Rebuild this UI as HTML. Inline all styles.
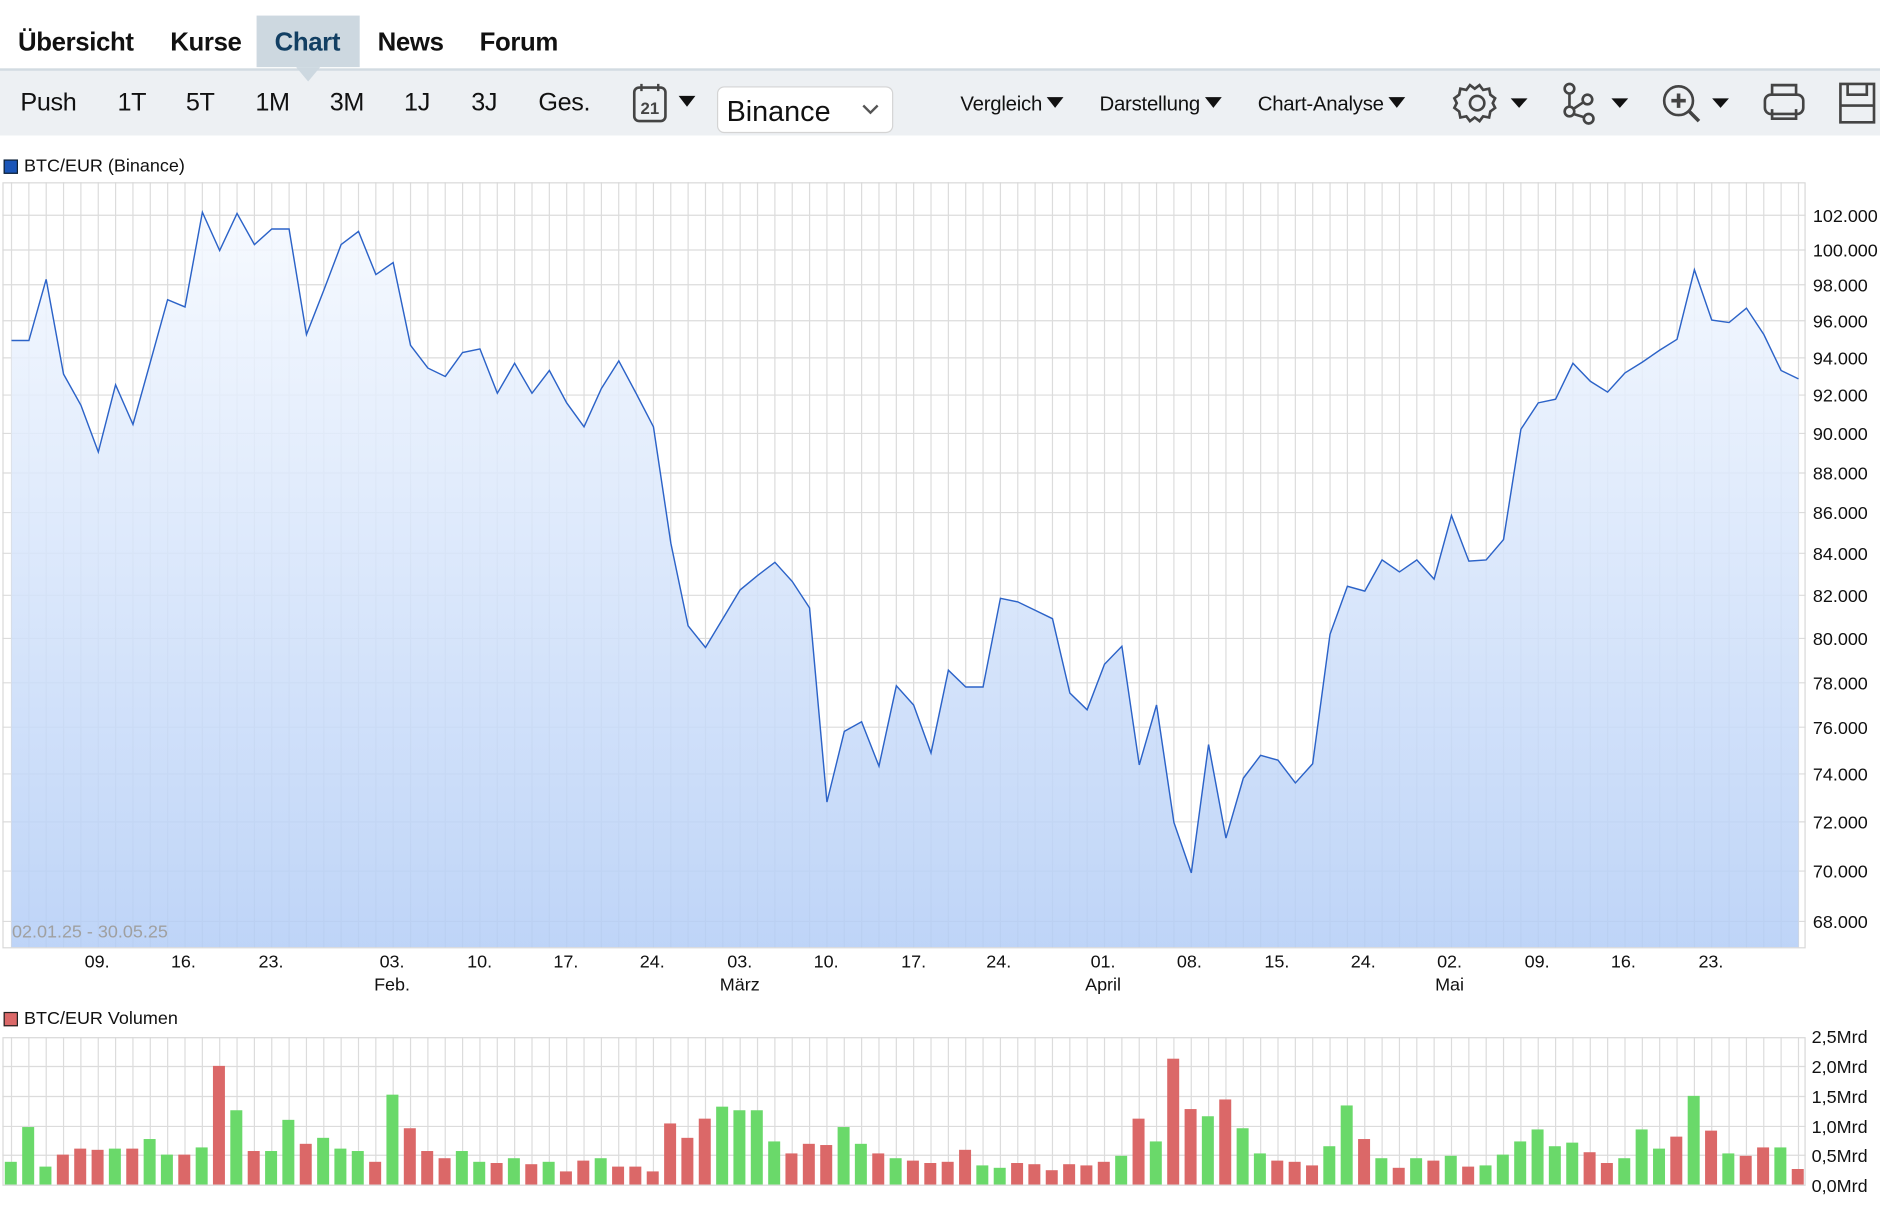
<!DOCTYPE html>
<html><head><meta charset="utf-8">
<style>
html,body{margin:0;padding:0;background:#fff;overflow:hidden;width:1880px;height:1206px}
#w{position:absolute;left:0;top:0;width:1568px;height:1006px;transform:scale(1.19898);transform-origin:0 0;font-family:"Liberation Sans",sans-serif;color:#111}
.tab{position:absolute;top:13px;height:43px;line-height:44px;font-weight:bold;font-size:21.5px;letter-spacing:-0.3px}
.tb{position:absolute;top:57px;left:0;width:1568px;height:56px;background:#edf0f3;border-top:2px solid #d2dbe2;box-sizing:border-box}
.ti{position:absolute;top:74px;font-size:21px;letter-spacing:-0.3px}
.dd{position:absolute;top:77px;font-size:17px;letter-spacing:-0.2px}
.car{display:inline-block;width:0;height:0;border-left:7px solid transparent;border-right:7px solid transparent;border-top:9px solid #111;margin-left:4px;vertical-align:2px}
.ax{font-size:15px;fill:#111}
</style></head><body><div id="w">
<div style="position:absolute;left:214px;top:13px;width:86px;height:43px;background:#cdd8e0"></div>
<div style="position:absolute;left:247px;top:56px;width:0;height:0;border-left:10px solid transparent;border-right:10px solid transparent;border-top:12px solid #cdd8e0;z-index:3"></div>
<div class="tab" style="left:15px">Übersicht</div>
<div class="tab" style="left:142px">Kurse</div>
<div class="tab" style="left:229px;color:#123f63">Chart</div>
<div class="tab" style="left:315px">News</div>
<div class="tab" style="left:400px">Forum</div>
<div class="tb"></div>
<div class="ti" style="left:17px">Push</div>
<div class="ti" style="left:98px">1T</div>
<div class="ti" style="left:155px">5T</div>
<div class="ti" style="left:213px">1M</div>
<div class="ti" style="left:275px">3M</div>
<div class="ti" style="left:337px">1J</div>
<div class="ti" style="left:393px">3J</div>
<div class="ti" style="left:449px">Ges.</div>
<svg style="position:absolute;left:526px;top:68px" width="60" height="36">
<rect x="3" y="5" width="26" height="28" rx="4" fill="none" stroke="#444" stroke-width="2.2"/>
<line x1="9" y1="2" x2="9" y2="8" stroke="#444" stroke-width="2"/><line x1="23" y1="2" x2="23" y2="8" stroke="#444" stroke-width="2"/>
<text x="16" y="27" text-anchor="middle" font-size="14" font-weight="bold" fill="#444" font-family="Liberation Sans">21</text>
<path d="M40 12 L54 12 L47 21Z" fill="#111"/></svg>
<div style="position:absolute;left:598px;top:72px;width:147px;height:39px;background:#fff;border:1px solid #d4d4d4;border-radius:6px;box-sizing:border-box"></div>
<div style="position:absolute;left:606px;top:80px;font-size:24px">Binance</div>
<svg style="position:absolute;left:718px;top:85px" width="16" height="12"><path d="M2 3 L8 9 L14 3" fill="none" stroke="#555" stroke-width="2"/></svg>
<div class="dd" style="left:801px">Vergleich<span class="car"></span></div>
<div class="dd" style="left:917px">Darstellung<span class="car"></span></div>
<div class="dd" style="left:1049px">Chart-Analyse<span class="car"></span></div>
<svg style="position:absolute;left:1210px;top:64px" width="358" height="44" fill="none" stroke="#444" stroke-width="2.2">
<path d="M24 7 l3 4 5-1 1 5 4 3-2 4 2 4-4 3-1 5-5-1-3 4-4-3-4 3-3-4-5 1-1-5-4-3 2-4-2-4 4-3 1-5 5 1 3-4 4 3z"/>
<circle cx="22" cy="22" r="6"/>
<path d="M50 18 L64 18 L57 26Z" fill="#111" stroke="none"/>
<circle cx="99" cy="10" r="4"/><circle cx="114" cy="19" r="4"/><circle cx="99" cy="29" r="4"/><circle cx="115" cy="35" r="4"/>
<path d="M99 14 V25 M102 27 L111 21 M102 31 L112 34"/>
<path d="M134 18 L148 18 L141 26Z" fill="#111" stroke="none"/>
<circle cx="190" cy="20" r="12"/><path d="M199 29 L207 37 M184 20 H196 M190 14 V26" stroke-width="3"/>
<path d="M218 18 L232 18 L225 26Z" fill="#111" stroke="none"/>
<rect x="262" y="15" width="32" height="16" rx="5"/><path d="M268 15 V7 H288 V15 M268 27 V35 H288 V27"/>
<path d="M325 6 H353 V38 H325Z M331 6 V15 H347 V6 M325 24 H353"/>
</svg>
<div style="position:absolute;left:3px;top:133px;width:10px;height:10px;background:#1a55b8;border:1px solid #123"></div>
<div style="position:absolute;left:20px;top:130px;font-size:15px">BTC/EUR (Binance)</div>
<div style="position:absolute;left:3px;top:844px;width:10px;height:10px;background:#db6868;border:1px solid #222"></div>
<div style="position:absolute;left:20px;top:841px;font-size:15px">BTC/EUR Volumen</div>
<svg id="s" style="position:absolute;left:0;top:0" width="1568" height="1006">
<defs><linearGradient id="g" x1="0" y1="0" x2="0" y2="1"><stop offset="0" stop-color="#f5f9ff"/><stop offset="1" stop-color="#b3cdf6"/></linearGradient></defs>
<g id="grid" stroke="#dcdcdc" stroke-width="1"></g>
<path id="fill" fill="url(#g)" fill-opacity="0.85"/>
<polyline id="line" fill="none" stroke="#2c63c8" stroke-width="1.2"/>
<g id="bars"></g>
<rect x="2.5" y="152.5" width="1503" height="638" fill="none" stroke="#d8d8d8"/>
<rect x="2.5" y="865.5" width="1503" height="123" fill="none" stroke="#d8d8d8"/>
<text x="10" y="782" font-size="15" fill="#a0a0a0">02.01.25 - 30.05.25</text>
<g class="ax">
<text x="1512" y="185">102.000</text><text x="1512" y="214">100.000</text><text x="1512" y="243">98.000</text><text x="1512" y="273">96.000</text><text x="1512" y="304">94.000</text><text x="1512" y="335">92.000</text><text x="1512" y="367">90.000</text><text x="1512" y="400">88.000</text><text x="1512" y="433">86.000</text><text x="1512" y="467">84.000</text><text x="1512" y="502">82.000</text><text x="1512" y="538">80.000</text><text x="1512" y="575">78.000</text><text x="1512" y="612">76.000</text><text x="1512" y="651">74.000</text><text x="1512" y="691">72.000</text><text x="1512" y="732">70.000</text><text x="1512" y="774">68.000</text>
<text x="1511" y="870">2,5Mrd</text><text x="1511" y="895">2,0Mrd</text><text x="1511" y="920">1,5Mrd</text><text x="1511" y="945">1,0Mrd</text><text x="1511" y="969">0,5Mrd</text><text x="1511" y="994">0,0Mrd</text>
</g>
<g class="ax" text-anchor="middle">
<text x="81" y="807">09.</text><text x="153" y="807">16.</text><text x="226" y="807">23.</text><text x="327" y="807">03.</text><text x="327" y="826">Feb.</text><text x="400" y="807">10.</text><text x="472" y="807">17.</text><text x="544" y="807">24.</text><text x="617" y="807">03.</text><text x="617" y="826">März</text><text x="689" y="807">10.</text><text x="762" y="807">17.</text><text x="833" y="807">24.</text><text x="920" y="807">01.</text><text x="920" y="826">April</text><text x="992" y="807">08.</text><text x="1065" y="807">15.</text><text x="1137" y="807">24.</text><text x="1209" y="807">02.</text><text x="1209" y="826">Mai</text><text x="1282" y="807">09.</text><text x="1354" y="807">16.</text><text x="1427" y="807">23.</text>
</g>
</svg>
</div>
<script>
(function(){
var NS="http://www.w3.org/2000/svg",ST=14.47;
function el(p,t,a){var e=document.createElementNS(NS,t);for(var k in a)e.setAttribute(k,a[k]);p.appendChild(e);return e;}
var grid=document.getElementById('grid');
var hy=[179,208,237,267,298,329,361,394,427,461,496,532,569,606,645,685,726,768];
hy.forEach(function(y){el(grid,'line',{x1:2,x2:1506,y1:y+.5,y2:y+.5});});
[889,914,939,963].forEach(function(y){el(grid,'line',{x1:2,x2:1506,y1:y+.5,y2:y+.5});});
for(var x=9.6;x<1506;x+=ST){el(grid,'line',{x1:x,x2:x,y1:152,y2:790});el(grid,'line',{x1:x,x2:x,y1:865,y2:988});}
var ys=[284,284,233,312,338,377,321,354,302,250,256,177,209,178,204,191,191,279,242,204,193,229,219,288,307,314,294,291,328,303,328,309,336,356,324,301,328,356,453,522,540,516,492,480,469,485,507,669,610,602,639,572,588,628,559,573,573,499,502,509,516,578,592,554,539,638,588,686,728,621,699,649,630,634,653,637,529,489,493,467,477,467,483,430,468,467,450,358,336,333,303,318,327,311,302,292,283,225,267,269,257,279,309,316];
var pts=ys.map(function(y,i){return (9.6+i*ST).toFixed(1)+','+y;});
document.getElementById('line').setAttribute('points',pts.join(' '));
var lx=(9.6+(ys.length-1)*ST).toFixed(1);
document.getElementById('fill').setAttribute('d','M9.6,790 L'+pts.join(' L')+' L'+lx+',790Z');
var v="969g940g973g963r958r959r958g958r950g963g963r957g889r926g960r960g934g954r949g958g960g969r913g941r960r966r960g969g970r966g971r969g977r968r966g973r973r977r937r949r933r923g926g926g952g962r954r955r940g954g962r966g968r970r969r959r972g974g970r971r976r971r972r969r964g933r952g883r925r931g917r941g962g968r969r972r956g922g950r966g974r966g968r964g973r972g963g952g942g956g953g961r970r966g942g958g948r914g943r962g964r957r957g975r";
var b=document.getElementById('bars'),re=/(\d+)([gr])/g,m,i=0;
while((m=re.exec(v))){var ty=+m[1];el(b,'rect',{x:(4+i*ST).toFixed(1),y:ty,width:10,height:988-ty,fill:m[2]=='g'?'#6ad96a':'#db6868'});i++;}
})();
</script>
</body></html>
